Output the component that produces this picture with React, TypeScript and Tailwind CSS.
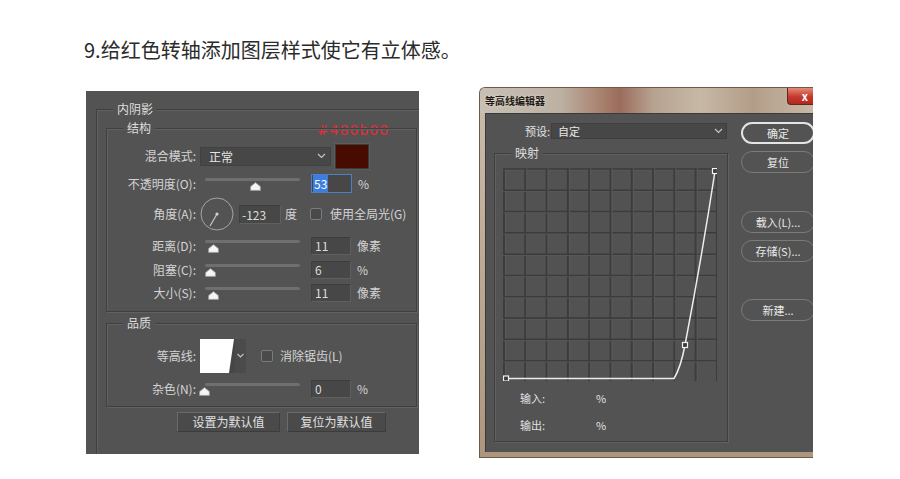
import React from "react";

const FONT = '"Noto Sans CJK SC", "Noto Sans", "DejaVu Sans", sans-serif';

function Chevron() {
  return (
    <svg width="9" height="6" viewBox="0 0 9 6">
      <polyline points="1,1 4.5,4.5 8,1" fill="none" stroke="#c4c4c4" strokeWidth="1.2" />
    </svg>
  );
}

function Thumb({ pos }: { pos: string }) {
  return (
    <svg width="11" height="9" viewBox="0 0 11 9" className={"absolute top-[7px] " + pos}>
      <path
        d="M5.5 0.6 L10.4 4.6 L10.4 8.4 L0.6 8.4 L0.6 4.6 Z"
        fill="#f5f5f5"
        stroke="#9a9a9a"
        strokeWidth="0.8"
        strokeLinejoin="round"
      />
    </svg>
  );
}

function Slider({ pos }: { pos: string }) {
  return (
    <div className="relative w-[111px] h-[18px] shrink-0">
      <div className="absolute left-[5px] top-[3px] w-[95px] h-[3px] rounded-full bg-[#6f6f6f]" />
      <Thumb pos={pos} />
    </div>
  );
}

function Field({ value }: { value: string }) {
  return (
    <div className="w-[40px] h-[18px] shrink-0 bg-[#474747] border border-[#5f5f5f] border-t-[#3d3d3d] border-l-[#404040] text-[12px] leading-[16px] pl-[3px] text-[#dcdcdc]">
      {value}
    </div>
  );
}

function Label({ children }: { children: React.ReactNode }) {
  return (
    <div className="w-[89px] shrink-0 text-right text-[12px] leading-[18px] text-[#d4d4d4] whitespace-nowrap">
      {children}
    </div>
  );
}

function Unit({ children }: { children: React.ReactNode }) {
  return <div className="ml-[6px] text-[12px] leading-[18px] text-[#d4d4d4]">{children}</div>;
}

function CheckBox() {
  return <div className="w-[12px] h-[12px] shrink-0 rounded-[2px] border border-[#7b7b7b] bg-[#4a4a4a]" />;
}

function Group({
  label,
  className,
  children,
}: {
  label: string;
  className: string;
  children?: React.ReactNode;
}) {
  return (
    <div
      className={
        "relative border border-[#3f3f3f] shadow-[inset_1px_1px_0_#616161,1px_1px_0_#616161] " + className
      }
    >
      <div className="absolute left-[16px] top-[-9px] px-[4px] bg-[#535353] text-[12px] leading-[16px] text-[#dedede]">
        {label}
      </div>
      {children}
    </div>
  );
}

function PsButton({ w, children }: { w: string; children: React.ReactNode }) {
  return (
    <div
      className={
        "h-[20px] bg-[#4a4a4a] border border-[#6a6a6a] border-b-[#3c3c3c] border-r-[#3e3e3e] text-center text-[12px] leading-[18px] text-[#e0e0e0] " +
        w
      }
    >
      {children}
    </div>
  );
}

function LeftPanel() {
  return (
    <div className="mt-[4px] ml-[86px] w-[333px] h-[363px] shrink-0 bg-[#535353] overflow-hidden pl-[10px] pt-[18px] relative">
      {/* annotation */}
      <div
        className="absolute left-[231px] top-[31px] text-[14px] leading-[16px] tracking-[1px] text-[#ea2a36]"
        style={{ fontFamily: '"DejaVu Sans", sans-serif' }}
      >
        #480b00
      </div>
      <Group label="内阴影" className="w-[340px] h-[400px] pl-[9px] pt-[18px]">
        <Group label="结构" className="w-[311px] h-[184px] pt-[14px]">
          {/* row 1 */}
          <div className="flex items-center h-[26px]">
            <Label>混合模式:</Label>
            <div className="ml-[4px] w-[131px] h-[19px] bg-[#474747] border border-[#414141] flex items-center pl-[8px] pr-[4px]">
              <span className="text-[12px] leading-[17px] text-[#e4e4e4]">正常</span>
              <span className="ml-auto flex">
                <Chevron />
              </span>
            </div>
            <div className="ml-[4px] w-[34px] h-[25px] bg-[#480b00] border border-[#3a3a3a] shadow-[0_0_0_1px_#5c5c5c]" />
          </div>
          {/* row 2 */}
          <div className="mt-[5px] flex items-center h-[19px]">
            <Label>不透明度(O):</Label>
            <div className="ml-[4px] flex items-center">
              <Slider pos="left-[50px]" />
              <div className="w-[41px] h-[19px] shrink-0 bg-[#474747] border border-[#4c7fc6] text-[12px] leading-[17px] pl-[1px]">
                <span className="bg-[#3b7ee0] text-white px-[1px]">53</span>
              </div>
              <Unit>%</Unit>
            </div>
          </div>
          {/* row 3 */}
          <div className="mt-[4px] flex items-center h-[34px]">
            <Label>角度(A):</Label>
            <svg width="34" height="34" viewBox="0 0 34 34" className="ml-[4px] shrink-0">
              <circle cx="17" cy="17" r="16" fill="none" stroke="#a5a5a5" strokeWidth="1" />
              <line x1="17" y1="17" x2="10" y2="29" stroke="#c8c8c8" strokeWidth="1.2" />
              <circle cx="17" cy="17" r="1.6" fill="#d0d0d0" />
            </svg>
            <div className="ml-[5px] w-[42px] h-[19px] shrink-0 bg-[#474747] border border-[#5f5f5f] border-t-[#3d3d3d] border-l-[#404040] text-[12px] leading-[17px] pl-[2px] text-[#dcdcdc]">
              -123
            </div>
            <div className="ml-[4px] text-[12px] leading-[18px] text-[#d4d4d4]">度</div>
            <div className="ml-[13px]">
              <CheckBox />
            </div>
            <div className="ml-[8px] text-[12px] leading-[18px] text-[#d4d4d4] whitespace-nowrap">使用全局光(G)</div>
          </div>
          {/* row 4 */}
          <div className="mt-[6px] flex items-center h-[18px]">
            <Label>距离(D):</Label>
            <div className="ml-[4px] flex items-center">
              <Slider pos="left-[8px]" />
              <Field value="11" />
              <Unit>像素</Unit>
            </div>
          </div>
          {/* row 5 */}
          <div className="mt-[6px] flex items-center h-[18px]">
            <Label>阻塞(C):</Label>
            <div className="ml-[4px] flex items-center">
              <Slider pos="left-[5px]" />
              <Field value="6" />
              <Unit>%</Unit>
            </div>
          </div>
          {/* row 6 */}
          <div className="mt-[5px] flex items-center h-[18px]">
            <Label>大小(S):</Label>
            <div className="ml-[4px] flex items-center">
              <Slider pos="left-[8px]" />
              <Field value="11" />
              <Unit>像素</Unit>
            </div>
          </div>
        </Group>

        <Group label="品质" className="mt-[11px] w-[311px] h-[84px] pt-[15px]">
          <div className="flex items-center h-[34px]">
            <Label>等高线:</Label>
            <svg width="46" height="34" viewBox="0 0 46 34" className="ml-[4px] shrink-0">
              <rect x="0" y="0" width="46" height="34" fill="#464646" />
              <polygon points="0,0 34,0 29,34 0,34" fill="#ffffff" />
              <rect x="35" y="0" width="11" height="34" fill="#4b4b4b" />
              <polyline points="37.5,15 40.5,18 43.5,15" fill="none" stroke="#c4c4c4" strokeWidth="1.1" />
            </svg>
            <div className="ml-[15px]">
              <CheckBox />
            </div>
            <div className="ml-[7px] text-[12px] leading-[18px] text-[#d4d4d4] whitespace-nowrap">消除锯齿(L)</div>
          </div>
          <div className="mt-[7px] flex items-center h-[18px]">
            <Label>杂色(N):</Label>
            <div className="ml-[4px] flex items-center">
              <Slider pos="left-[-1px]" />
              <Field value="0" />
              <Unit>%</Unit>
            </div>
          </div>
        </Group>

        <div className="mt-[5px] ml-[71px] flex gap-[7px]">
          <PsButton w="w-[103px]">设置为默认值</PsButton>
          <PsButton w="w-[99px]">复位为默认值</PsButton>
        </div>
      </Group>
    </div>
  );
}

function Grid() {
  const step = 21.3;
  const lines = [];
  for (let i = 0; i <= 10; i++) {
    const p = 1 + i * step;
    lines.push(<line key={"v" + i} x1={p} y1={0} x2={p} y2={213} stroke="#3c3c3c" strokeWidth="2" />);
    lines.push(<line key={"vh" + i} x1={p + 1.5} y1={0} x2={p + 1.5} y2={213} stroke="#5c5c5c" strokeWidth="0.8" />);
    lines.push(<line key={"h" + i} x1={0} y1={p} x2={214} y2={p} stroke="#3c3c3c" strokeWidth="1.6" />);
    lines.push(<line key={"hh" + i} x1={0} y1={p + 1.3} x2={214} y2={p + 1.3} stroke="#5a5a5a" strokeWidth="0.7" />);
  }
  return (
    <svg width="214" height="213" viewBox="0 0 214 213" className="block">
      <rect x="0" y="0" width="214" height="213" fill="#525252" />
      {lines}
      <path
        d="M3 210.5 L171 210.5 C175 204 179 193 182 177 C190 135 203 62 212 3"
        fill="none"
        stroke="#ececec"
        strokeWidth="1.5"
      />
      <rect x="0.5" y="208" width="5" height="5" fill="#3a3a3a" stroke="#f2f2f2" strokeWidth="1.2" />
      <rect x="179.5" y="174.5" width="5" height="5" fill="#3a3a3a" stroke="#f2f2f2" strokeWidth="1.2" />
      <rect x="209.5" y="0.5" width="5" height="5" fill="#3a3a3a" stroke="#f2f2f2" strokeWidth="1.2" />
    </svg>
  );
}

function Pill({ children, primary, mt }: { children: React.ReactNode; primary?: boolean; mt: string }) {
  return (
    <div
      className={
        (primary
          ? "border-2 border-[#e4e4e4] leading-[18px] "
          : "border border-[#7a7a7a] leading-[20px] ") +
        "w-[74px] h-[22px] rounded-full text-center text-[11px] text-[#e8e8e8] whitespace-nowrap " +
        mt
      }
    >
      {children}
    </div>
  );
}

function RightDialog() {
  return (
    <div className="ml-[60px] w-[334px] h-[371px] shrink-0 overflow-hidden rounded-tl-[6px] border-l border-t border-b border-[#6c5b49] bg-[linear-gradient(180deg,#cbbcab,#ad967e)] flex flex-col">
      <div className="h-[25px] shrink-0 flex items-start bg-[linear-gradient(90deg,#c8c0b5_0%,#bdb1a3_24%,#a98270_36%,#9a6c5c_42%,#b7a290_52%,#c7b8a6_66%,#b39d88_82%,#c9b9a6_100%)]">
        <div className="pl-[5px] pt-[6px] text-[10px] leading-[13px] font-bold text-[#1e1a16] [text-shadow:0_0_3px_#e8e0d6]">
          等高线编辑器
        </div>
        <div className="ml-auto w-[26px] h-[17px] rounded-bl-[4px] border border-t-0 border-r-0 border-[#5b2a22] bg-[linear-gradient(180deg,#e48a78,#c5392d_55%,#b3291f)] flex items-center justify-end pr-[5px] text-[11px] leading-[11px] font-bold text-white">
          x
        </div>
      </div>
      <div className="ml-[5px] h-[339px] shrink-0 bg-[#535353] border-t border-l border-[#3a3a3a] flex">
        <div className="w-[244px] shrink-0">
          <div className="mt-[9px] flex items-center h-[16px]">
            <div className="w-[64px] text-right text-[11px] leading-[16px] text-[#e2e2e2]">预设:</div>
            <div className="ml-[1px] w-[176px] h-[16px] bg-[#474747] border border-[#3f3f3f] flex items-center pl-[6px] pr-[3px]">
              <span className="text-[11px] leading-[14px] text-[#e8e8e8]">自定</span>
              <span className="ml-auto flex">
                <Chevron />
              </span>
            </div>
          </div>
          <Group label="映射" className="ml-[8px] mt-[14px] w-[234px] h-[289px]">
            <div className="ml-[8px] mt-[14px]">
              <Grid />
            </div>
            <div className="mt-[10px] ml-[25px] flex h-[14px] text-[11px] leading-[14px] text-[#e0e0e0]">
              <div className="w-[76px]">输入:</div>
              <div>%</div>
            </div>
            <div className="mt-[13px] ml-[25px] flex h-[14px] text-[11px] leading-[14px] text-[#e0e0e0]">
              <div className="w-[76px]">输出:</div>
              <div>%</div>
            </div>
          </Group>
        </div>
        <div className="ml-[11px] pt-[8px] flex flex-col">
          <Pill primary mt="mt-0">确定</Pill>
          <Pill mt="mt-[7px]">复位</Pill>
          <Pill mt="mt-[38px]">载入(L)...</Pill>
          <Pill mt="mt-[7px]">存储(S)...</Pill>
          <Pill mt="mt-[37px]">新建...</Pill>
        </div>
      </div>
    </div>
  );
}

export default function App() {
  return (
    <div className="w-[900px] h-[479px] bg-white overflow-hidden flex flex-col" style={{ fontFamily: FONT }}>
      <div className="h-[87px] shrink-0 pt-[36px] pl-[84px] text-[20px] leading-[28px] text-[#2b2b2b] whitespace-nowrap">
        9.给红色转轴添加图层样式使它有立体感。
      </div>
      <div className="flex items-start">
        <LeftPanel />
        <RightDialog />
      </div>
    </div>
  );
}
